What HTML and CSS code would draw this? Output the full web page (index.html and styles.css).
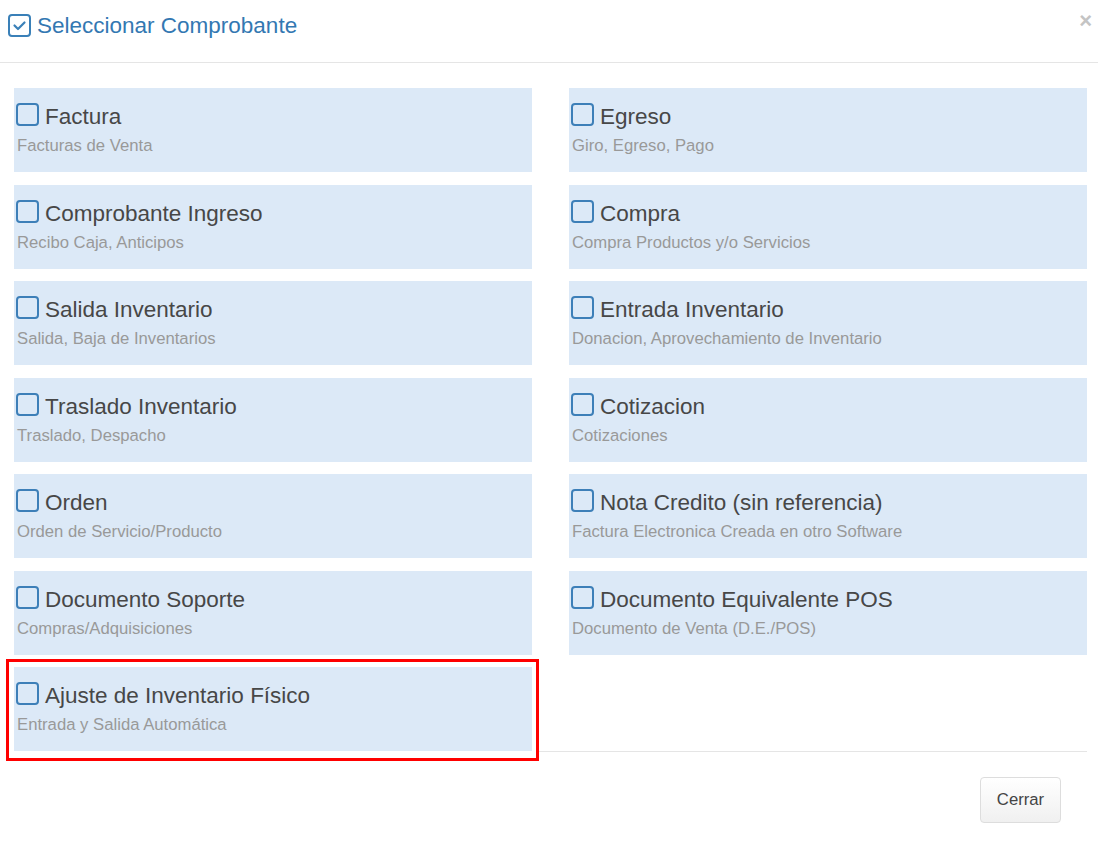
FILE: index.html
```html
<!DOCTYPE html>
<html lang="es">
<head>
<meta charset="utf-8">
<title>Seleccionar Comprobante</title>
<link rel="stylesheet" href="styles.css">
</head>
<body>
<div class="modal">
  <div class="modal-header">
    <h4 class="modal-title">
      <svg class="title-icon" width="23" height="23" viewBox="0 0 23 23" aria-hidden="true">
        <rect x="1" y="1" width="21" height="21" rx="3" ry="3" fill="none" stroke="#3a80b8" stroke-width="2"/>
        <path d="M6.5 11.5 L10 15 L16.5 8.5" fill="none" stroke="#3a80b8" stroke-width="2.2" stroke-linecap="round" stroke-linejoin="round"/>
      </svg>
      <span>Seleccionar Comprobante</span>
    </h4>
    <span class="close">&times;</span>
  </div>
  <div class="modal-body">
    <div class="grid">
      <div class="card"><div class="card-title"><span class="cb"></span><span>Factura</span></div><div class="card-sub">Facturas de Venta</div></div>
      <div class="card"><div class="card-title"><span class="cb"></span><span>Egreso</span></div><div class="card-sub">Giro, Egreso, Pago</div></div>
      <div class="card"><div class="card-title"><span class="cb"></span><span>Comprobante Ingreso</span></div><div class="card-sub">Recibo Caja, Anticipos</div></div>
      <div class="card"><div class="card-title"><span class="cb"></span><span>Compra</span></div><div class="card-sub">Compra Productos y/o Servicios</div></div>
      <div class="card"><div class="card-title"><span class="cb"></span><span>Salida Inventario</span></div><div class="card-sub">Salida, Baja de Inventarios</div></div>
      <div class="card"><div class="card-title"><span class="cb"></span><span>Entrada Inventario</span></div><div class="card-sub">Donacion, Aprovechamiento de Inventario</div></div>
      <div class="card"><div class="card-title"><span class="cb"></span><span>Traslado Inventario</span></div><div class="card-sub">Traslado, Despacho</div></div>
      <div class="card"><div class="card-title"><span class="cb"></span><span>Cotizacion</span></div><div class="card-sub">Cotizaciones</div></div>
      <div class="card"><div class="card-title"><span class="cb"></span><span>Orden</span></div><div class="card-sub">Orden de Servicio/Producto</div></div>
      <div class="card"><div class="card-title"><span class="cb"></span><span>Nota Credito (sin referencia)</span></div><div class="card-sub">Factura Electronica Creada en otro Software</div></div>
      <div class="card"><div class="card-title"><span class="cb"></span><span>Documento Soporte</span></div><div class="card-sub">Compras/Adquisiciones</div></div>
      <div class="card"><div class="card-title"><span class="cb"></span><span>Documento Equivalente POS</span></div><div class="card-sub">Documento de Venta (D.E./POS)</div></div>
      <div class="highlight">
        <div class="card"><div class="card-title"><span class="cb"></span><span>Ajuste de Inventario Físico</span></div><div class="card-sub">Entrada y Salida Automática</div></div>
      </div>
    </div>
  </div>
  <div class="modal-footer">
    <button class="btn" type="button">Cerrar</button>
  </div>
</div>
</body>
</html>
```

FILE: styles.css
```css
html, body {
  margin: 0;
  padding: 0;
  background: #ffffff;
}

body {
  font-family: "Liberation Sans", Arial, sans-serif;
  width: 1098px;
  height: 848px;
  overflow: hidden;
}

.modal {
  display: flex;
  flex-direction: column;
}

.modal-header {
  height: 62px;
  border-bottom: 1px solid #e5e5e5;
  display: flex;
  justify-content: space-between;
  align-items: flex-start;
  box-sizing: content-box;
}

.modal-title {
  margin: 0;
  padding: 13px 0 0 8px;
  display: flex;
  align-items: center;
  gap: 6px;
  font-weight: normal;
  font-size: 22.5px;
  line-height: 25px;
  color: #3378b2;
}

.title-icon {
  display: block;
  margin-top: -1px;
}

.close {
  margin: 10px 6px 0 0;
  font-size: 22px;
  font-weight: bold;
  line-height: 22px;
  color: #c4c4c4;
}

.modal-body {
  padding: 25px 11px 0 14px;
}

.grid {
  display: grid;
  grid-template-columns: 518px 518px;
  column-gap: 37px;
  grid-auto-rows: 84px;
  row-gap: 12.5px;
}

.card {
  background: #dce9f7;
  padding: 16px 2px 0 2px;
  box-sizing: border-box;
  height: 84px;
}

.card-title {
  display: flex;
  align-items: flex-start;
  font-size: 22.5px;
  line-height: 25px;
  color: #474747;
}

.cb {
  flex: none;
  width: 23px;
  height: 23px;
  box-sizing: border-box;
  border: 2px solid #3d7fb8;
  border-radius: 4px;
  margin-right: 6px;
  margin-top: -1px;
}

.card-sub {
  margin-top: 7px;
  padding-left: 1px;
  font-size: 16.7px;
  line-height: 20px;
  color: #999999;
}

.highlight {
  position: relative;
  z-index: 1;
  margin: -8px -7px -10px -8px;
  padding: 5px 4px 7px 5px;
  border: 3px solid #ff0000;
  background: #ffffff;
}

.modal-footer {
  margin: 0 11px 0 10px;
  border-top: 1px solid #e5e5e5;
  padding: 25px 26px 0 0;
  display: flex;
  justify-content: flex-end;
}

.btn {
  font-family: "Liberation Sans", Arial, sans-serif;
  font-size: 16.7px;
  color: #444444;
  width: 81px;
  height: 46px;
  border: 1px solid #dddddd;
  border-radius: 4px;
  background: linear-gradient(#ffffff, #f0f0f0);
  padding: 0;
}
```
